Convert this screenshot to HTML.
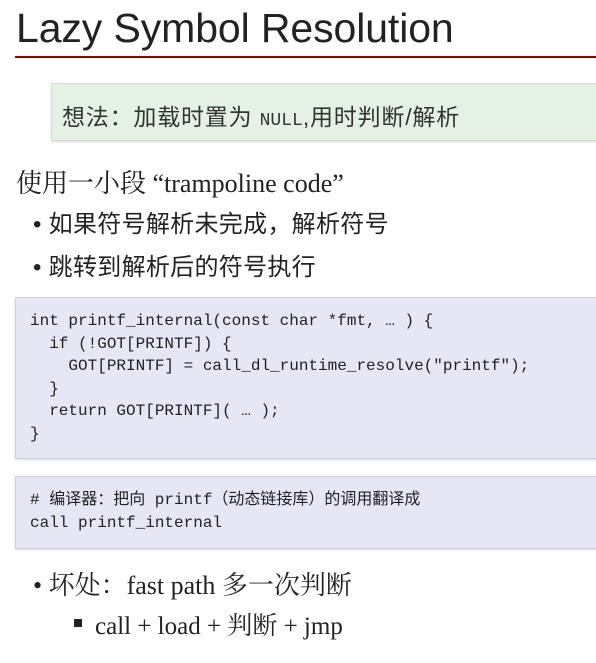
<!DOCTYPE html>
<html><head><meta charset="utf-8"><style>
body{margin:0;width:596px;height:663px;overflow:hidden;background:#fff;color:#222;font-family:"Liberation Serif","Noto Serif CJK SC",serif;}
.a{position:absolute;white-space:nowrap;}
h1{position:absolute;left:16px;top:5px;margin:0;font:400 41px "Liberation Sans",sans-serif;color:#222;letter-spacing:-0.1px}
.rule{position:absolute;left:15px;top:56px;width:581px;height:2px;background:#8b0000}
.note{position:absolute;left:51px;top:83px;width:560px;height:56px;background:#e3f2e3;border:1px solid #d4dcd4;border-right:none;box-shadow:0 1px 2px rgba(0,0,0,.15);}
.note span{position:absolute;left:10px;top:14px;font:23px "Liberation Sans","Noto Sans CJK SC",sans-serif;color:#333;letter-spacing:0.8px}
.code{position:absolute;left:15px;width:600px;background:#e6e6f5;border:1px solid #d0d0de;box-shadow:0 1px 2px rgba(0,0,0,.15);font:16px/22.6px "Liberation Mono","Noto Sans CJK SC",monospace;color:#222;white-space:pre;}
.code div{position:absolute;left:14px;}
.s{font-family:'Liberation Sans','Noto Sans CJK SC',sans-serif;font-size:24px;letter-spacing:0.3px}
</style></head><body>
<h1>Lazy Symbol Resolution</h1>
<div class="rule"></div>
<div class="note"><span>想法：加载时置为 <span style="position:static;font-family:'Liberation Mono',monospace;font-size:18px;letter-spacing:0">NULL</span>,用时判断/解析</span></div>
<div class="a" style="left:16px;top:163px;font-size:26px">使用一小段 “trampoline code”</div>
<div class="a s" style="left:33px;top:204px">• 如果符号解析未完成，解析符号</div>
<div class="a s" style="left:33px;top:247px">• 跳转到解析后的符号执行</div>
<div class="code" style="top:297px;height:160px"><div style="top:12px">int printf_internal(const char *fmt, … ) {
  if (!GOT[PRINTF]) {
    GOT[PRINTF] = call_dl_runtime_resolve("printf");
  }
  return GOT[PRINTF]( … );
}</div></div>
<div class="code" style="top:476px;height:71px"><div style="top:12px"># 编译器：把向 printf（动态链接库）的调用翻译成
call printf_internal</div></div>
<div class="a" style="left:33px;top:565px;font-size:26px">• 坏处：fast path 多一次判断</div>
<div class="a" style="left:74px;top:619px;width:8px;height:8px;background:#222"></div>
<div class="a" style="left:95px;top:606px;font-size:25px">call + load + 判断 + jmp</div>
</body></html>
